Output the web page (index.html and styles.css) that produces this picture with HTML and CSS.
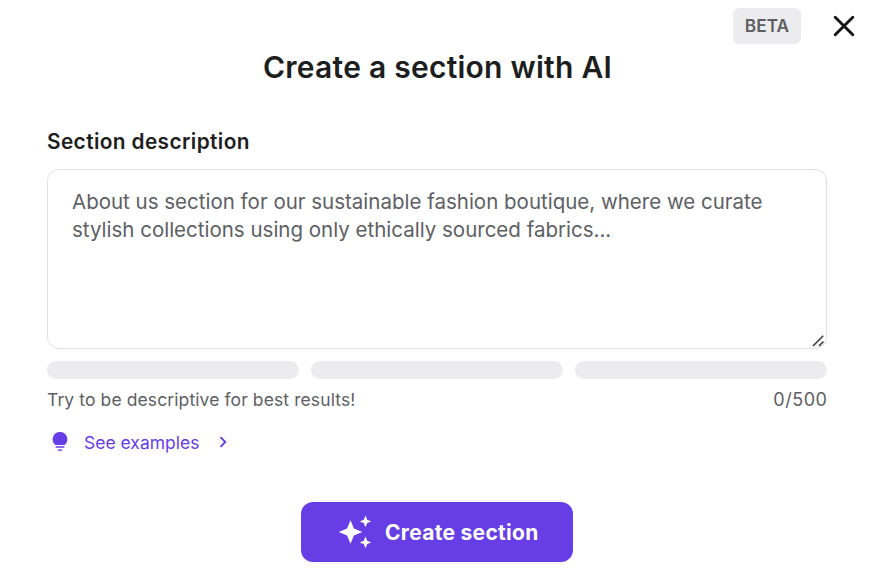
FILE: index.html
```html
<!DOCTYPE html>
<html lang="en">
<head>
<meta charset="utf-8">
<title>Create a section with AI</title>
<link rel="stylesheet" href="styles.css">
</head>
<body>
<main class="dialog">
  <header class="topbar">
    <span class="badge">BETA</span>
    <button class="close" aria-label="Close">
      <svg width="24" height="24" viewBox="0 0 24 24"><path d="M3.2 3.2 20.8 20.8M20.8 3.2 3.2 20.8"/></svg>
    </button>
  </header>
  <h1 class="title">Create a section with AI</h1>
  <form class="form">
    <label class="label" for="description">Section description</label>
    <div class="field">
      <textarea class="input" id="description" placeholder="About us section for our sustainable fashion boutique, where we curate
stylish collections using only ethically sourced fabrics..."></textarea>
      <svg class="grip" width="14" height="14" viewBox="0 0 14 14"><path d="M1 12 11.2 1.8M7 12 11.4 7.6"/></svg>
    </div>
    <div class="meter"><i></i><i></i><i></i></div>
    <div class="hint"><span class="tip">Try to be descriptive for best results!</span><span class="count">0/500</span></div>
    <a class="examples">
      <svg class="bulb" width="16" height="20" viewBox="0 0 16 20"><path d="M8 0a7.3 7.3 0 0 0-4.6 13h9.2A7.3 7.3 0 0 0 8 0zM3.6 14.3h8.8v1.5H3.6zM5.4 17.5h5.2a2.7 2.1 0 0 1-5.2 0z"/></svg>
      <span class="examples-text">See examples</span>
      <svg class="chevron" width="8" height="12" viewBox="0 0 8 12"><path d="M1.5 1.2 6.3 6 1.5 10.8"/></svg>
    </a>
    <button class="submit" type="button">
      <svg class="sparkles" width="34" height="34" viewBox="0 0 34 34"><path d="M11.5 5.2 14.9 13.6 23.3 17 14.9 20.4 11.5 28.8 8.1 20.4-.3 17 8.1 13.6zM26.5 .6 28.2 4.7 32.3 6.4 28.2 8.1 26.5 12.2 24.8 8.1 20.7 6.4 24.8 4.7zM26.5 21.6 28.2 25.7 32.3 27.4 28.2 29.1 26.5 33.2 24.8 29.1 20.7 27.4 24.8 25.7z"/></svg>
      <span class="submit-text">Create section</span>
    </button>
  </form>
</main>
</body>
</html>
```
FILE: styles.css
```css
* { box-sizing: border-box; }
body {
  margin: 0;
  background: #fff;
  color: #1d1e20;
  font-family: Inter, "Liberation Sans", sans-serif;
}
button { border: 0; padding: 0; background: none; font: inherit; }
svg { display: block; flex: none; overflow: visible; }
.dialog { height: 577px; overflow: hidden; }
.topbar {
  display: flex;
  justify-content: flex-end;
  align-items: center;
  gap: 31px;
  padding: 8px 19px 0 0;
}
.badge {
  width: 68px;
  height: 36px;
  border-radius: 6px;
  background: #ececee;
  color: #5d5e63;
  font-size: 17.3px;
  font-weight: 600;
  line-height: 36px;
  text-align: center;
}
.close path { fill: none; stroke: #141416; stroke-width: 2.9; stroke-linecap: round; }
.title {
  margin: 3px 0 0;
  font-size: 30px;
  font-weight: 600;
  letter-spacing: 0.25px;
  line-height: 40px;
  text-align: center;
  white-space: nowrap;
}
.form { display: flex; flex-direction: column; margin: 41px 48px 0 47px; }
.label {
  align-self: flex-start;
  font-size: 20.8px;
  font-weight: 600;
  letter-spacing: 0.4px;
  line-height: 28px;
  white-space: nowrap;
}
.field { position: relative; height: 180px; margin-top: 13px; }
.input {
  display: block;
  width: 100%;
  height: 100%;
  padding: 18px 24px;
  border: 1px solid #e0e0e3;
  border-radius: 12px;
  background: #fff;
  font: 400 20.5px/28px Inter, sans-serif;
  white-space: pre;
  overflow: hidden;
  resize: none;
  outline: 0;
}
.input::placeholder { color: #5d6064; opacity: 1; }
.grip { position: absolute; right: 1px; bottom: 1px; }
.grip path { fill: none; stroke: #3c3d40; stroke-width: 1.6; }
.meter { display: grid; grid-template-columns: repeat(3, 1fr); gap: 12px; margin-top: 12px; }
.meter i { height: 18px; border-radius: 9px; background: #ececee; }
.hint {
  display: flex;
  justify-content: space-between;
  margin-top: 9px;
  color: #5d6064;
  font-size: 17.5px;
  line-height: 24px;
  white-space: nowrap;
}
.tip { letter-spacing: 0.1px; }
.count { font-size: 18px; letter-spacing: 0.55px; margin-right: -0.5px; }
.examples {
  display: flex;
  align-items: center;
  height: 24px;
  margin-top: 18px;
  padding-left: 5px;
  color: #673de6;
  font-size: 17.5px;
  white-space: nowrap;
}
.bulb { fill: #673de6; }
.examples-text { width: 115px; margin: 0 20px 0 16px; }
.chevron path { fill: none; stroke: #673de6; stroke-width: 1.9; }
.submit {
  display: flex;
  align-items: center;
  align-self: center;
  gap: 12px;
  width: 272px;
  height: 60px;
  margin-top: 48px;
  padding-left: 38px;
  border-radius: 12px;
  background: #673de6;
  color: #fff;
  font-size: 21px;
  font-weight: 700;
  letter-spacing: 0.3px;
  white-space: nowrap;
}
.sparkles { fill: #fff; }
```
